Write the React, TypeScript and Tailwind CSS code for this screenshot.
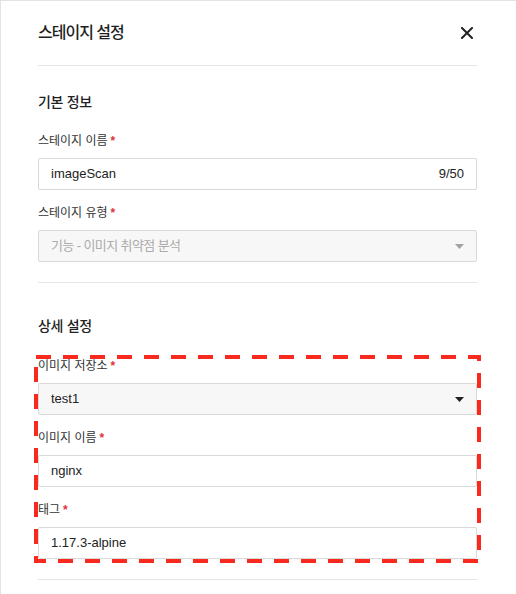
import { FC, ReactNode } from 'react';

const font = { fontFamily: '"Liberation Sans", "Noto Sans CJK KR", sans-serif' };

const Label: FC<{ children: ReactNode; className?: string }> = ({ children, className = '' }) => (
  <div className={`flex items-center h-[18px] mb-2 text-[12px] leading-[18px] text-[#333] ${className}`}>
    {children}
    <span className="ml-[3px] text-[#e0323a] font-bold">*</span>
  </div>
);

const Caret: FC<{ color: string }> = ({ color }) => (
  <svg width="9" height="5" viewBox="0 0 9 5" className="shrink-0">
    <path d="M0 0 H9 L4.5 5 Z" fill={color} />
  </svg>
);

const TextInput: FC<{ value: string; counter?: string }> = ({ value, counter }) => (
  <div className="flex items-center justify-between h-8 px-3 bg-white border border-[#d9d9d9] rounded-[2px] text-[13px] text-[#222]">
    <span>{value}</span>
    {counter && <span>{counter}</span>}
  </div>
);

const SelectBox: FC<{ value: string; disabled?: boolean }> = ({ value, disabled }) => (
  <div className="flex items-center justify-between h-8 px-3 bg-[#f7f7f7] border border-[#d9d9d9] rounded-[2px] text-[13px]">
    <span className={disabled ? 'text-[#ababab] tracking-[-0.6px]' : 'text-[#222]'}>{value}</span>
    <Caret color={disabled ? '#a3a3a3' : '#222'} />
  </div>
);

export default function App() {
  return (
    <div className="w-[516px] h-[594px] bg-white border-l border-t border-[#e3e3e3] overflow-hidden" style={font}>
      <div className="pl-[37px] pr-[39px]">
        {/* Header */}
        <div className="flex items-center justify-between h-[65px] border-b border-[#e6e6e6]">
          <h2 className="text-[16px] font-medium tracking-[-1px] text-[#1f1f1f]">스테이지 설정</h2>
          <svg width="12" height="12" viewBox="0 0 12 12" className="mr-1">
            <path d="M1 1 L11 11 M11 1 L1 11" stroke="#222" strokeWidth="2" strokeLinecap="square" />
          </svg>
        </div>

        {/* 기본 정보 */}
        <div className="pt-[26px] pb-5 border-b border-[#e6e6e6]">
          <h3 className="h-5 leading-5 text-[14px] font-medium tracking-[-0.3px] text-[#222] mb-5">기본 정보</h3>
          <Label>스테이지 이름</Label>
          <TextInput value="imageScan" counter="9/50" />
          <Label className="mt-[14px]">스테이지 유형</Label>
          <SelectBox value="기능 - 이미지 취약점 분석" disabled />
        </div>

        {/* 상세 설정 */}
        <div className="pt-[33px] pb-5 border-b border-[#e6e6e6]">
          <h3 className="h-5 leading-5 text-[14px] font-medium tracking-[-0.3px] text-[#222] mb-[21px]">상세 설정</h3>
          <div className="relative">
            <svg width="447" height="208" className="absolute -left-1 -top-[2px] pointer-events-none">
              <rect x="2" y="2" width="443" height="204" fill="none" stroke="#f8291f" strokeWidth="4" strokeDasharray="15 12" />
            </svg>
            <Label>이미지 저장소</Label>
            <SelectBox value="test1" />
            <Label className="mt-[14px]">이미지 이름</Label>
            <TextInput value="nginx" />
            <Label className="mt-[14px]">태그</Label>
            <TextInput value="1.17.3-alpine" />
          </div>
        </div>
      </div>
    </div>
  );
}
